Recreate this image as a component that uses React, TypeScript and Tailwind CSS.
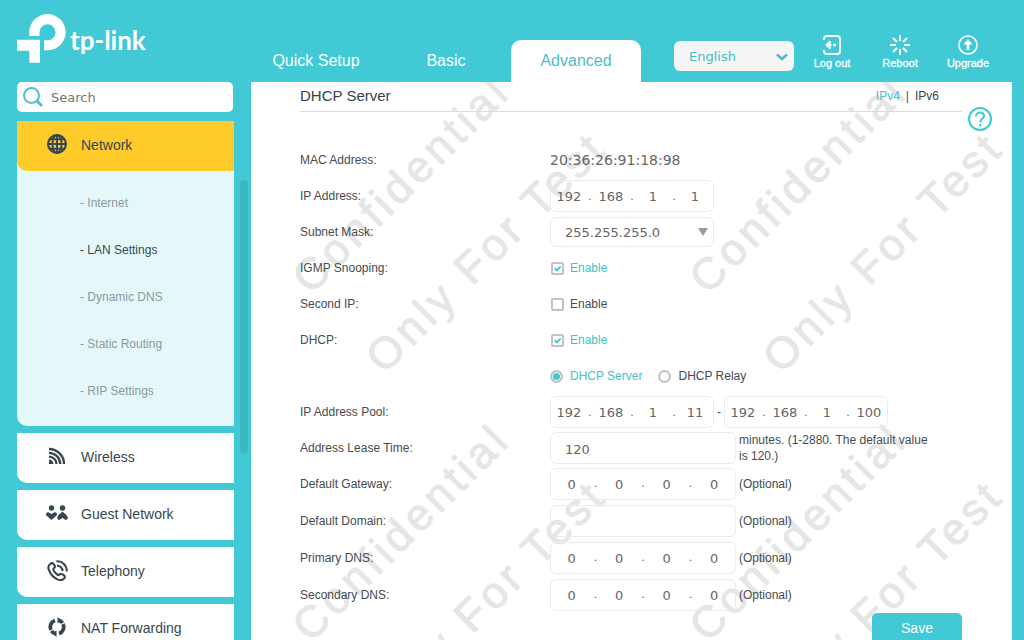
import { useState } from 'react';
import type { ReactNode } from 'react';

const tabs = ['Quick Setup', 'Basic', 'Advanced'];
const networkItems = ['Internet', 'LAN Settings', 'Dynamic DNS', 'Static Routing', 'RIP Settings'];

function Logo() {
  return (
    <a href="#home" aria-label="tp-link" className="flex items-start gap-1 text-white">
      <svg viewBox="51 42 147 147" className="w-[49px] h-[49px]" fill="currentColor" aria-hidden="true">
        <path d="M88 108V96.500A54.500 54.500 0 1 1 142.500 151H132V121H142A24 24 0 1 0 118.500 97V108Z" />
        <path d="M51 119H120V188H88V152H51Z" />
      </svg>
      <span className="pt-[10px] font-['Lato',sans-serif] font-bold text-[26px] leading-8">tp-link</span>
    </a>
  );
}

function GlobeIcon() {
  return (
    <svg viewBox="0 0 20 20" className="w-5 h-5" fill="none" stroke="currentColor" strokeWidth="2.200" aria-hidden="true">
      <circle cx="10" cy="10" r="8.900" />
      <ellipse cx="10" cy="10" rx="4.600" ry="9" strokeWidth="2" />
      <path d="M10 1v18M1 10h18M2.500 5.200h15M2.500 14.800h15" strokeWidth="1.900" />
    </svg>
  );
}

function WirelessIcon() {
  return (
    <svg viewBox="0 0 20 20" className="w-5 h-5" fill="none" stroke="currentColor" strokeWidth="2.300" aria-hidden="true">
      <path d="M2 3A15 15 0 0 1 17 18M2 6.800A11.200 11.200 0 0 1 13.200 18M2 10.600A7.400 7.400 0 0 1 9.400 18" />
      <path d="M2 13.500A4.500 4.500 0 0 1 6.500 18H2Z" fill="currentColor" stroke="none" />
    </svg>
  );
}

function GuestIcon() {
  return (
    <svg viewBox="0 0 22 16" className="w-[22px] h-4" fill="currentColor" aria-hidden="true">
      <circle cx="5.500" cy="3" r="2.700" />
      <circle cx="16.500" cy="3" r="2.700" />
      <path d="M0 9.200C0 7.600 1.800 6.800 3.200 7.700L5.500 9L7.800 7.700C9.200 6.800 11 7.600 11 9.200C11 10.400 9.500 11.400 5.500 15C1.500 11.400 0 10.400 0 9.200Z" />
      <path d="M16.500 6.500C18.500 8.200 21.800 10.800 21.800 12.800C21.800 14.800 20 15.300 18.700 14.400L16.500 12.700L14.300 14.400C13 15.300 11.200 14.800 11.200 12.800C11.200 10.800 14.500 8.200 16.500 6.500Z" />
    </svg>
  );
}

function PhoneIcon() {
  return (
    <svg viewBox="0 0 20 20" className="w-[21px] h-[21px]" fill="none" stroke="currentColor" strokeWidth="2" strokeLinejoin="round" aria-hidden="true">
      <path d="M3.200 3.600C1.300 4.800 .900 7 1.800 9.500C3.300 13.700 6.700 17.200 10.500 18.700C13 19.600 15.200 19 16.600 17.200C17.300 16.300 17 15.300 16.200 14.700L14.300 13.400C13.500 12.900 12.600 13.100 12 13.800C11.300 14.500 10.400 14.400 9.600 13.700C8.200 12.600 7 11.200 6.200 9.700C5.800 8.800 6.100 8.100 6.900 7.600C7.700 7.100 7.800 6.200 7.300 5.400L6.300 4C5.500 3 4.200 2.900 3.200 3.600Z" />
      <path d="M9.500 5.500C12.500 5.300 14.800 7.500 14.800 10.500M9 1.300C14.500 .700 19.200 5.200 18.800 11" />
    </svg>
  );
}

function NatIcon() {
  return (
    <svg viewBox="0 0 20 20" className="w-5 h-5" fill="none" stroke="currentColor" strokeWidth="3.800" aria-hidden="true">
      <path d="M8 3.500A6.900 6.900 0 0 0 3.900 13M4.400 14A6.900 6.900 0 0 0 8.800 16.800M12 16.500A6.900 6.900 0 0 0 16.100 7M15.600 6A6.900 6.900 0 0 0 11.200 3.200" />
      <path d="M10.500 0L14 3.300L10.500 6.500ZM9.500 13.500L6 16.700L9.500 20Z" fill="currentColor" stroke="none" />
    </svg>
  );
}

function HeaderAction({ label, children }: { label: string; children: ReactNode }) {
  return (
    <button type="button" className="w-[68px] flex flex-col items-center text-white text-[11px] leading-4">
      <svg viewBox="0 0 20 20" className="w-5 h-5" fill="none" stroke="currentColor" strokeWidth="2" aria-hidden="true">
        {children}
      </svg>
      <span className="[-webkit-text-stroke:0.3px]">{label}</span>
    </button>
  );
}

function MenuItem({ label, icon }: { label: string; icon: ReactNode }) {
  return (
    <a href="#menu" className="flex items-center h-[50px] shrink-0 bg-white rounded-bl-[10px] text-[#37474f]">
      <span className="w-16 pl-4 pb-1 flex justify-center">{icon}</span>
      <span className="pb-[2px]">{label}</span>
    </a>
  );
}

function Row({ label, htmlFor, children }: { label?: string; htmlFor?: string; children: ReactNode }) {
  return (
    <div className="flex items-center">
      <label htmlFor={htmlFor} className="w-[250px] shrink-0">{label}</label>
      {children}
    </div>
  );
}

function IpField({ id, label, value, wide }: { id: string; label: string; value: string; wide?: boolean }) {
  return (
    <div
      role="group"
      aria-label={label}
      className={`flex items-center h-8 pt-[2px] border border-[#ebebeb] rounded-md text-[13px] text-[#666] font-['DejaVu_Sans',sans-serif] ${wide ? 'w-[186px]' : 'w-[164px]'}`}
    >
      {value.split('.').map((octet, i) => (
        <div key={i} className="contents">
          {i > 0 && <span className="w-[6px] text-center text-[11px]">.</span>}
          <input
            id={i === 0 ? id : undefined}
            aria-label={`${label} octet ${i + 1}`}
            defaultValue={octet}
            className="flex-1 min-w-0 bg-transparent text-center outline-none"
          />
        </div>
      ))}
    </div>
  );
}

function EnableBox({ id, initial }: { id: string; initial: boolean }) {
  const [checked, setChecked] = useState(initial);
  return (
    <label className={`flex items-center gap-[6px] pl-px ${checked ? 'text-[#45c3c9]' : ''}`}>
      <span className="relative w-[13px] h-[13px]">
        <input
          id={id}
          type="checkbox"
          checked={checked}
          onChange={(e) => setChecked(e.target.checked)}
          className="block appearance-none w-[13px] h-[13px] border-2 border-[#c0c2c7] rounded-[2px] bg-white"
        />
        {checked && (
          <svg viewBox="0 0 13 13" className="absolute inset-0 pointer-events-none" fill="none" stroke="#41c9d2" strokeWidth="1.800" aria-hidden="true">
            <path d="M3.500 6.300L5.700 8.500L9.700 4.500" />
          </svg>
        )}
      </span>
      Enable
    </label>
  );
}

function ModeRadio({ label, checked, onSelect }: { label: string; checked: boolean; onSelect: () => void }) {
  return (
    <label className={`flex items-center gap-[7px] ${checked ? 'text-[#45c3c9]' : ''}`}>
      <input
        type="radio"
        name="dhcp-mode"
        checked={checked}
        onChange={onSelect}
        className="appearance-none w-[13px] h-[13px] rounded-full border-2 border-[#c0c2c7] bg-white checked:bg-[#41c9d2] checked:shadow-[inset_0_0_0_1px_white]"
      />
      {label}
    </label>
  );
}

function Watermark() {
  return (
    <div aria-hidden="true" className="absolute inset-0 overflow-hidden pointer-events-none grid grid-cols-[397px_397px] auto-rows-[348px] text-[44px] leading-none tracking-widest whitespace-nowrap text-[#e6e6e6] [-webkit-text-stroke:1px]">
      {[0, 1, 2, 3].map((tile) => (
        <div key={tile} className="relative">
          <span className="absolute left-[150px] top-[102px] -translate-x-1/2 -translate-y-1/2 -rotate-45">Confidential</span>
          <span className="absolute left-[235px] top-[170px] -translate-x-1/2 -translate-y-1/2 -rotate-45">Only For Test</span>
        </div>
      ))}
    </div>
  );
}

export default function App() {
  const [mode, setMode] = useState('server');

  return (
    <div className="h-screen flex flex-col overflow-hidden bg-[#41cad6] font-['Liberation_Sans',Arial,sans-serif] text-xs text-[#444c50]">
      <header className="flex h-[82px] shrink-0 pr-[22px]">
        <div className="w-[251px] shrink-0 pl-[17px] pt-[14px]">
          <Logo />
        </div>
        <nav className="flex items-end text-base">
          {tabs.map((tab) => (
            <a
              key={tab}
              href="#tab"
              className={`w-[130px] h-[42px] flex items-center justify-center rounded-t-[10px] ${tab === 'Advanced' ? 'bg-white text-[#4bc0c8]' : 'text-white'}`}
            >
              {tab}
            </a>
          ))}
        </nav>
        <div className="ml-auto flex items-start">
          <div className="relative mt-[41px] mr-1">
            <select
              aria-label="Language"
              className="appearance-none block w-[120px] h-[30px] pl-[15px] pt-[2px] rounded-md bg-[#f5f5f5] text-[13px] text-[#45bdc4] font-['DejaVu_Sans',sans-serif]"
            >
              <option>English</option>
            </select>
            <svg viewBox="0 0 12 8" className="absolute right-[6px] top-[12px] w-3 h-2 pointer-events-none" fill="none" stroke="#45bdc4" strokeWidth="2.500" aria-hidden="true">
              <path d="M1 1.500L6 6L11 1.500" />
            </svg>
          </div>
          <div className="flex pt-[35px]">
            <HeaderAction label="Log out">
              <path d="M2 5V4A3 3 0 0 1 5 1H15A3 3 0 0 1 18 4V16A3 3 0 0 1 15 19H5A3 3 0 0 1 2 16V15" />
              <path d="M8.500 6.300L4.800 10L8.500 13.700M5 10H9.500M11 10H14" strokeWidth="2.400" />
            </HeaderAction>
            <HeaderAction label="Reboot">
              <path d="M10 0V6M10 14V20M0 10H6M14 10H20M3 3L7 7M13 13L17 17M3 17L7 13M13 7L17 3" />
            </HeaderAction>
            <HeaderAction label="Upgrade">
              <circle cx="10" cy="10" r="9" strokeWidth="1.600" />
              <path d="M10 15V7.500" strokeWidth="2.600" />
              <path d="M10 4L14.500 9.500H5.500Z" fill="currentColor" stroke="none" />
            </HeaderAction>
          </div>
        </div>
      </header>

      <div className="flex flex-1 min-h-0">
        <aside className="w-[251px] shrink-0 pl-[17px] flex">
          <div className="w-[217px] flex flex-col">
            <div className="relative mr-px mb-[9px]">
              <svg viewBox="0 0 20 20" className="absolute left-[6px] top-[5px] w-5 h-5" fill="none" stroke="#4cc3cc" strokeWidth="2" aria-hidden="true">
                <circle cx="8.500" cy="8.500" r="7.500" />
                <path d="M14 14L19 19" strokeWidth="2.800" />
              </svg>
              <input
                type="search"
                aria-label="Search"
                placeholder="Search"
                className="block w-full h-[30px] pl-[34px] rounded-[5px] bg-white text-[13px] placeholder:text-[#757575] outline-none font-['DejaVu_Sans',sans-serif]"
              />
            </div>
            <nav className="flex flex-col gap-[7px] flex-1 min-h-0 overflow-hidden text-sm">
              <div className="shrink-0 rounded-bl-[10px] bg-[#e5f8f9] pb-[12px]">
                <a href="#network" className="flex items-center h-[50px] mb-[8px] bg-[#ffcb2b] rounded-bl-[10px] text-[#37474f]">
                  <span className="w-16 pl-4 pb-1 flex justify-center"><GlobeIcon /></span>
                  <span className="pb-[2px]">Network</span>
                </a>
                <ul className="text-xs">
                  {networkItems.map((item) => (
                    <li key={item}>
                      <a
                        href="#network"
                        className={`flex items-center h-[47px] pl-[63px] ${item === 'LAN Settings' ? 'text-[#37474f]' : 'text-[#8a9a9e]'}`}
                      >
                        - {item}
                      </a>
                    </li>
                  ))}
                </ul>
              </div>
              <MenuItem label="Wireless" icon={<WirelessIcon />} />
              <MenuItem label="Guest Network" icon={<GuestIcon />} />
              <MenuItem label="Telephony" icon={<PhoneIcon />} />
              <MenuItem label="NAT Forwarding" icon={<NatIcon />} />
            </nav>
          </div>
          <div className="ml-[6px] mt-[98px] w-2 h-[274px] rounded-full bg-[#3cb8c2]" />
        </aside>

        <main className="relative flex-1 min-w-0 mr-3 bg-white">
          <Watermark />
          <div className="relative pl-[49px] pr-[50px]">
            <div className="flex items-center justify-between h-[30px] mb-[30px] border-b border-[#dcdcdc] pb-[2px] pr-[23px]">
              <h1 className="text-[15px] text-[#37424a]">DHCP Server</h1>
              <div className="flex gap-[6px]">
                <a href="#ipv4" className="text-[#41c3cb]">IPv4</a>
                <span>|</span>
                <a href="#ipv6" className="text-[#37424a]">IPv6</a>
              </div>
            </div>

            <form>
              <div className="grid auto-rows-[36px]">
                <div className="flex items-center">
                  <span className="w-[250px] shrink-0">MAC Address:</span>
                  <span className="text-sm text-[#666] font-['DejaVu_Sans',sans-serif]">20:36:26:91:18:98</span>
                </div>
                <Row label="IP Address:" htmlFor="ip">
                  <IpField id="ip" label="IP Address" value="192.168.1.1" />
                </Row>
                <Row label="Subnet Mask:" htmlFor="mask">
                  <div className="relative">
                    <select
                      id="mask"
                      className="block appearance-none w-[164px] h-[30px] pl-[14px] pt-[2px] border border-[#ebebeb] rounded-md bg-transparent text-[13px] text-[#666] font-['DejaVu_Sans',sans-serif]"
                    >
                      <option>255.255.255.0</option>
                    </select>
                    <svg viewBox="0 0 10 8" className="absolute right-[6px] top-[11px] w-[10px] h-2 pointer-events-none" fill="#999" aria-hidden="true">
                      <path d="M0 0H10L5 8Z" />
                    </svg>
                  </div>
                </Row>
                <Row label="IGMP Snooping:" htmlFor="igmp">
                  <EnableBox id="igmp" initial={true} />
                </Row>
                <Row label="Second IP:" htmlFor="second-ip">
                  <EnableBox id="second-ip" initial={false} />
                </Row>
                <Row label="DHCP:" htmlFor="dhcp">
                  <EnableBox id="dhcp" initial={true} />
                </Row>
                <div className="flex items-center gap-4 pl-[250px]">
                  <ModeRadio label="DHCP Server" checked={mode === 'server'} onSelect={() => setMode('server')} />
                  <ModeRadio label="DHCP Relay" checked={mode === 'relay'} onSelect={() => setMode('relay')} />
                </div>
                <Row label="IP Address Pool:" htmlFor="pool-start">
                  <IpField id="pool-start" label="Pool start" value="192.168.1.11" />
                  <span className="w-[10px] text-center">-</span>
                  <IpField id="pool-end" label="Pool end" value="192.168.1.100" />
                </Row>
                <Row label="Address Lease Time:" htmlFor="lease">
                  <input
                    id="lease"
                    defaultValue="120"
                    className="w-[186px] h-8 pl-[14px] pt-[2px] border border-[#ebebeb] rounded-md bg-transparent text-[13px] text-[#666] font-['DejaVu_Sans',sans-serif] outline-none"
                  />
                  <span className="pl-[3px] w-[200px] leading-4">minutes. (1-2880. The default value is 120.)</span>
                </Row>
              </div>
              <div className="grid auto-rows-[37px] -mt-px">
                <Row label="Default Gateway:" htmlFor="gateway">
                  <IpField id="gateway" label="Default Gateway" value="0.0.0.0" wide />
                  <span className="pl-[3px]">(Optional)</span>
                </Row>
                <Row label="Default Domain:" htmlFor="domain">
                  <input
                    id="domain"
                    className="w-[186px] h-8 pl-[14px] pt-[2px] border border-[#ebebeb] rounded-md bg-transparent text-[13px] text-[#666] font-['DejaVu_Sans',sans-serif] outline-none"
                  />
                  <span className="pl-[3px]">(Optional)</span>
                </Row>
                <Row label="Primary DNS:" htmlFor="dns1">
                  <IpField id="dns1" label="Primary DNS" value="0.0.0.0" wide />
                  <span className="pl-[3px]">(Optional)</span>
                </Row>
                <Row label="Secondary DNS:" htmlFor="dns2">
                  <IpField id="dns2" label="Secondary DNS" value="0.0.0.0" wide />
                  <span className="pl-[3px]">(Optional)</span>
                </Row>
              </div>
              <div className="flex justify-end">
                <button type="submit" className="w-[90px] h-8 pb-[2px] rounded-[5px] bg-[#41cad6] text-white text-sm">Save</button>
              </div>
            </form>
          </div>

          <button type="button" aria-label="Help" className="absolute right-5 top-[25px] text-[#41c9d2]">
            <svg viewBox="0 0 24 24" className="block w-6 h-6" fill="none" stroke="currentColor" strokeWidth="2" aria-hidden="true">
              <circle cx="12" cy="12" r="11" />
              <path d="M8 9.500C8 7 9.700 5.600 12 5.600S16 7 16 9.200C16 11.800 12.200 12 12.200 15.500M12.200 17V19.200" />
            </svg>
          </button>
        </main>
      </div>
    </div>
  );
}
